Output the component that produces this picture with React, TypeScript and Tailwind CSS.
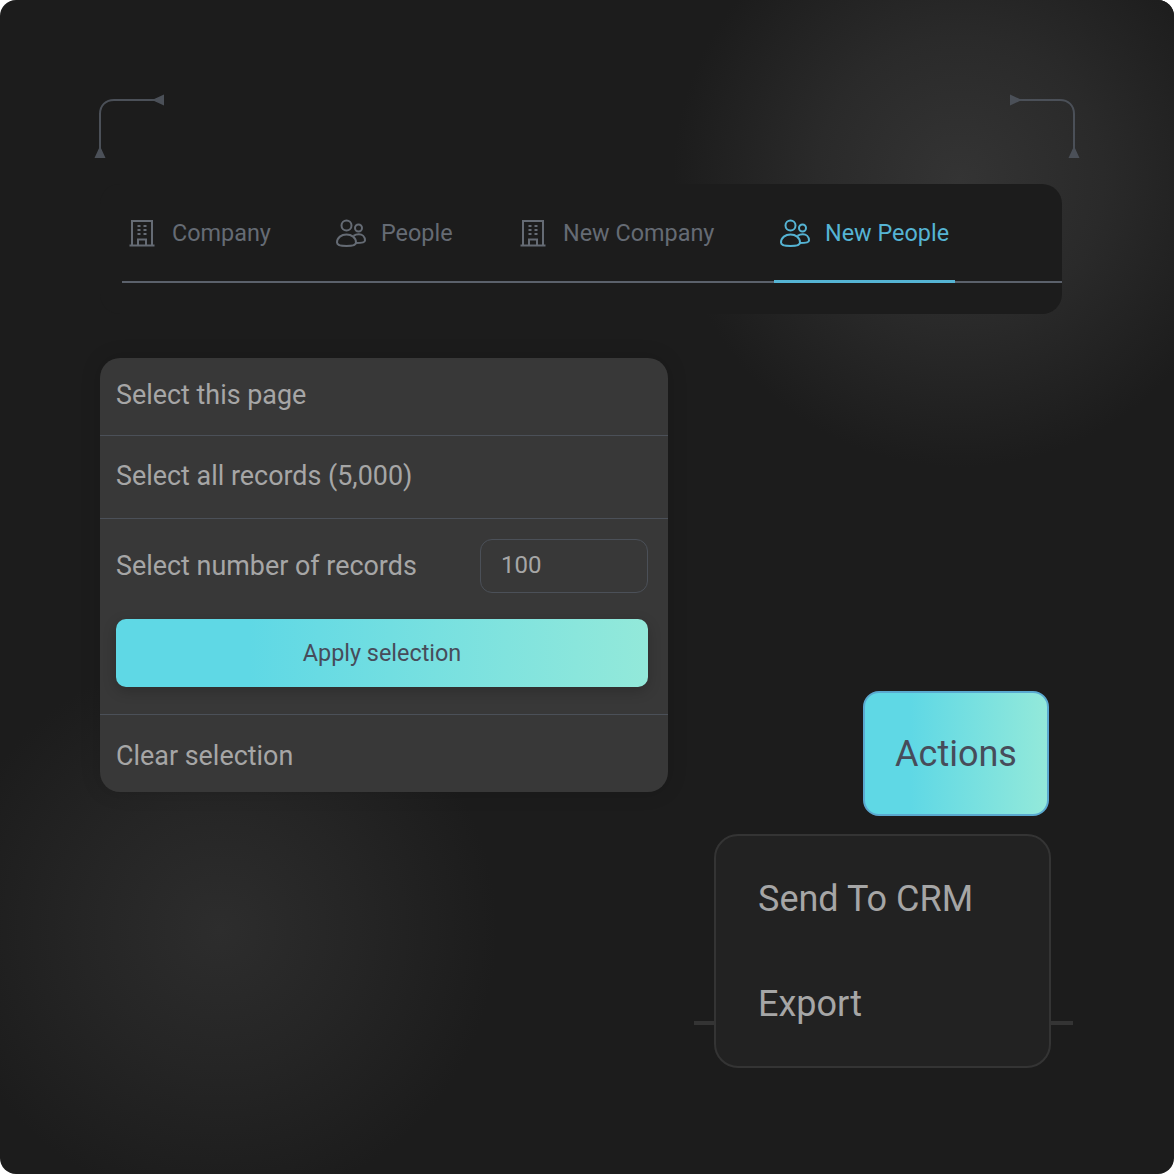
const BuildingIcon = () => (
  <svg width="26" height="28" viewBox="0 0 26 28" fill="none" stroke="currentColor" strokeWidth="2">
    <path d="M0.5 26.5H25.5M3 26.5V2H23V26.5M9 26.5V20.5H17V26.5M2 2H24" />
    <path d="M8.5 7H11.5M14.5 7H17.5M8.5 11H11.5M14.5 11H17.5M8.5 15H11.5M14.5 15H17.5" />
  </svg>
);

const PeopleIcon = () => (
  <svg width="30" height="28" viewBox="0 0 30 28" fill="none" stroke="currentColor" strokeWidth="2">
    <circle cx="10.5" cy="6.5" r="5" />
    <circle cx="22.5" cy="9" r="3.5" />
    <path d="M1 23.5C1 18.5 5.5 15.5 10.5 15.5C15.5 15.5 20 18.5 20 23.5C20 26 15 27 10.5 27C6 27 1 26 1 23.5Z" />
    <path d="M17.5 16.8C19 15.8 21 15.3 22.8 15.3C26.3 15.3 29 17.8 29 21.5C29 23.3 25.5 24 19.8 24" />
  </svg>
);

const Connector = ({ flip }: { flip?: boolean }) => (
  <svg width="70" height="64" viewBox="0 0 70 64" fill="none" className={flip ? "-scale-x-100" : ""}>
    <path d="M6 54V20C6 11 12 6 20 6H62" stroke="#4b5058" strokeWidth="2" />
    <path d="M6 52L11.5 64H0.5Z M58 6L70 0.5V11.5Z" fill="#4b5058" />
  </svg>
);

const tabs = [
  { label: "Company", icon: <BuildingIcon />, width: "w-[181px]", left: "pl-[7px]", gap: "gap-[17px]" },
  { label: "People", icon: <PeopleIcon />, width: "w-[184px]", left: "pl-[33px]", gap: "gap-[15px]" },
  { label: "New Company", icon: <BuildingIcon />, width: "w-[287px]", left: "pl-[33px]", gap: "gap-[17px]" },
];

export default function App() {
  return (
    <div className="bg-white font-['Roboto',sans-serif]">
      <div className="relative h-[1174px] w-[1174px] overflow-hidden rounded-[16px] bg-[#1c1c1c]">
        {/* background glows */}
        <div className="absolute left-[670px] top-[-110px] h-[580px] w-[580px] rounded-full bg-[radial-gradient(circle,#343434_0%,#2a2a2a_35%,#1c1c1c_70%)]" />
        <div className="absolute left-[-60px] top-[650px] h-[560px] w-[560px] rounded-full bg-[radial-gradient(circle,#2d2d2d_0%,#252525_35%,#1c1c1c_70%)]" />

        <div className="absolute left-[94px] top-[94px]">
          <Connector />
        </div>
        <div className="absolute left-[1010px] top-[94px]">
          <Connector flip />
        </div>

        <div className="relative pl-[100px] pt-[184px]">
          {/* tabs */}
          <div className="h-[130px] w-[962px] rounded-[20px] bg-[#1c1c1c] pl-[22px] pt-[32px]">
            <div className="flex h-[67px] border-b-2 border-[#5b616b]">
              {tabs.map((t) => (
                <div key={t.label} className={`flex h-[34px] items-center text-[23.4px] text-[#656b74] ${t.width} ${t.left} ${t.gap}`}>
                  {t.icon}
                  <span className="translate-y-px">{t.label}</span>
                </div>
              ))}
              <div className="-mb-[2px] h-[67px] w-[181px] border-b-[3px] border-[#55b4d4] pl-[6px] text-[23.4px] text-[#55b4d4]">
                <div className="flex h-[34px] items-center gap-[15px]">
                  <PeopleIcon />
                  <span className="translate-y-px">New People</span>
                </div>
              </div>
            </div>
          </div>

          {/* selection panel */}
          <div className="mt-[44px] w-[568px] rounded-[20px] bg-[#383838] text-[26.9px] text-[#a6a6a6] shadow-[0_0_20px_rgba(0,0,0,0.15)]">
            <div className="flex h-[78px] items-center border-b border-[#4b5058] pb-[3px] pl-[16px]">Select this page</div>
            <div className="flex h-[83px] items-center border-b border-[#4b5058] pb-[1px] pl-[16px]">Select all records (5,000)</div>
            <div className="h-[196px] border-b border-[#4b5058] pl-[16px] pr-[20px] pt-[20px]">
              <div className="flex items-center justify-between">
                <span>Select number of records</span>
                <div className="flex h-[54px] w-[168px] items-center rounded-[12px] border border-[#4b5058] pb-[2px] pl-[20px] text-[24px]">100</div>
              </div>
              <div className="mt-[26px] flex h-[68px] w-[532px] items-center justify-center rounded-[10px] bg-[linear-gradient(90deg,#5fd8e5_25%,#93e9da_100%)] pt-[2px] text-[23.4px] text-[#474c5a] shadow-[0_4px_14px_rgba(0,0,0,0.2)]">
                Apply selection
              </div>
            </div>
            <div className="flex h-[77px] items-center pl-[16px] pt-[5px]">Clear selection</div>
          </div>

          {/* actions */}
          <div className="ml-[615px] mt-[-101px] w-[336px]">
            <div className="ml-[148px] flex h-[125px] w-[186px] items-center justify-center rounded-[16px] border-2 border-[#5aa9d0] bg-[linear-gradient(90deg,#5fd8e5_25%,#93e9da_100%)] text-[36px] text-[#474c5a]">
              Actions
            </div>
            <div className="relative ml-[-1px] mt-[18px] h-[234px] w-[337px] rounded-[24px] border-2 border-[#343434] bg-[#222222] pl-[42px] text-[36px] text-[#a6a6a6]">
              <div className="absolute left-[-22px] top-[185px] h-[4px] w-[21px] bg-[#343434]" />
              <div className="absolute right-[-24px] top-[185px] h-[4px] w-[23px] bg-[#343434]" />
              <div className="flex h-[104px] items-end pb-[14px]">Send To CRM</div>
              <div className="flex h-[104px] items-center pt-[24px]">Export</div>
            </div>
          </div>
        </div>
      </div>
    </div>
  );
}
